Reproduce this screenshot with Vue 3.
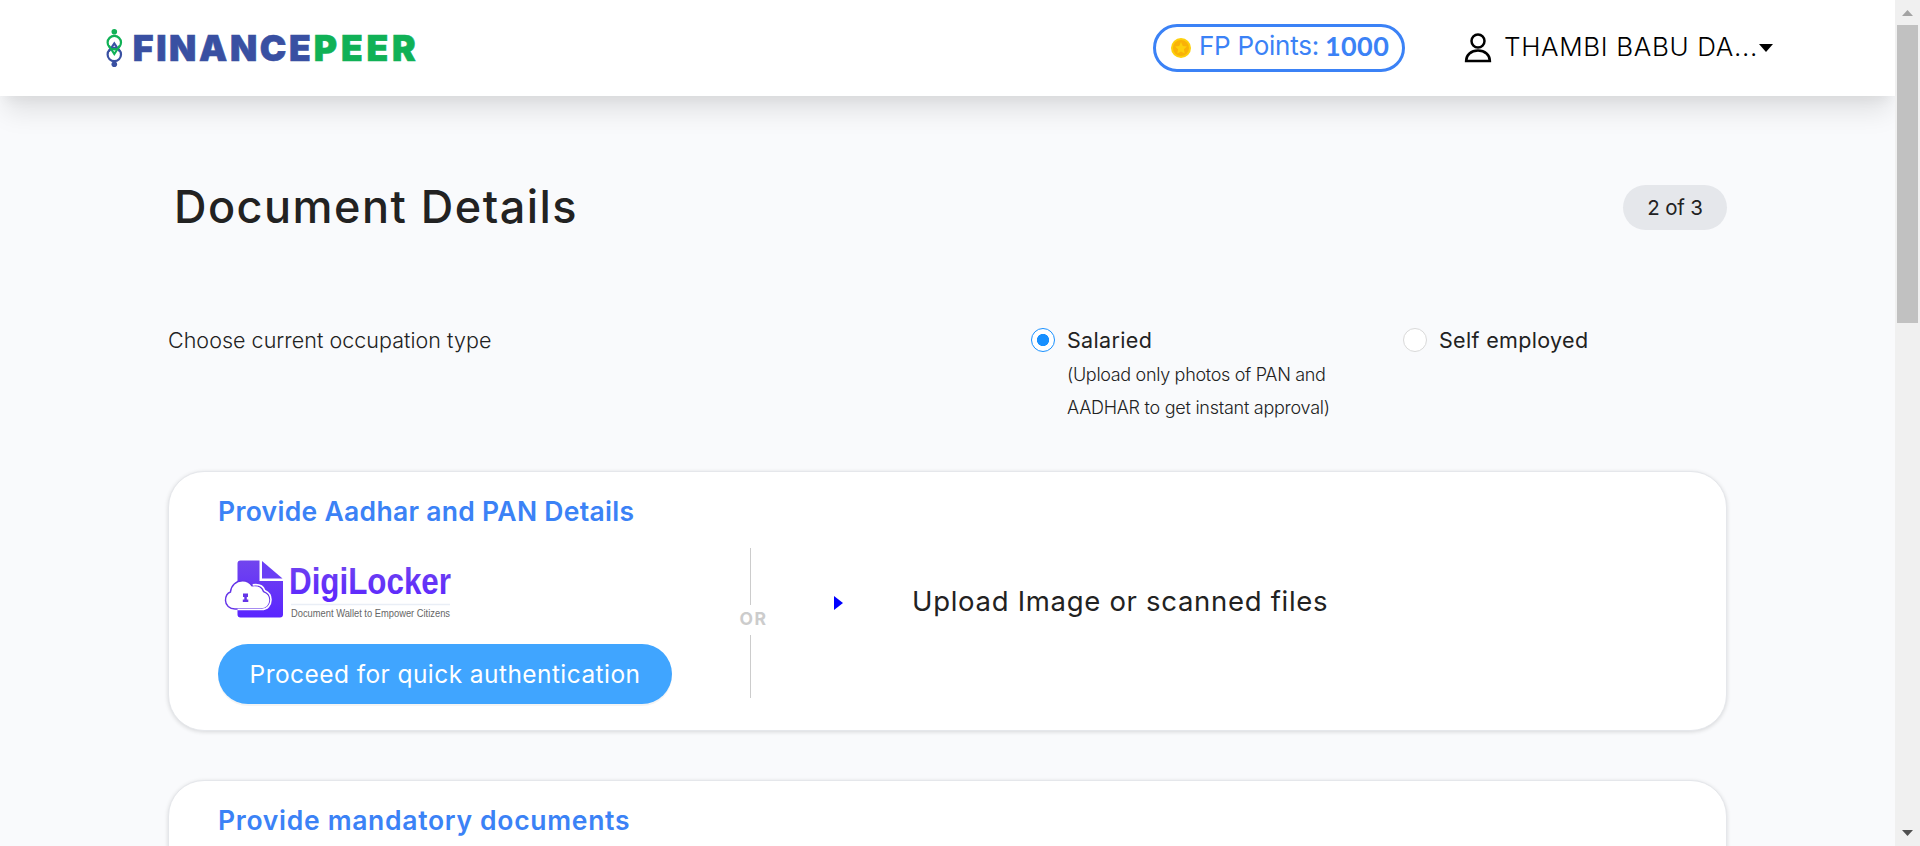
<script setup>
const occupations = [
  { label: 'Salaried', cls: 'salaried', checked: true, notes: ['(Upload only photos of PAN and', 'AADHAR to get instant approval)'] },
  { label: 'Self employed', cls: 'self', checked: false, notes: [] },
]
</script>

<template>
  <div class="screen">
    <div class="page">
      <header class="header">
        <svg class="brand" width="316" height="48" viewBox="0 0 316 48">
          <g fill="none" stroke-width="2.2">
            <circle cx="10.3" cy="30.5" r="6.7" stroke="#3950a2" />
            <circle cx="10.3" cy="18.6" r="6.7" stroke="#10b156" />
            <path d="M4.800 27.500 10.300 19.500l5.500 8" stroke="#3950a2" />
            <path d="M4.800 21.500l5.500 8.500 5.500-8.500" stroke="#10b156" />
          </g>
          <circle cx="10.3" cy="7.8" r="2.800" fill="#10b156" />
          <circle cx="10.3" cy="40.200" r="2.800" fill="#3950a2" />
          <text class="word" x="28.800" y="37" fill="#3950a2" stroke="#3950a2" textLength="178" lengthAdjust="spacing">FINANCE</text>
          <text class="word" x="209.800" y="37" fill="#10b156" stroke="#10b156" textLength="102" lengthAdjust="spacing">PEER</text>
        </svg>
        <div class="points">
          <svg class="coin" width="22" height="22" viewBox="0 0 22 22">
            <circle cx="11" cy="11" r="10" fill="#fdd00c" />
            <circle cx="11" cy="11" r="8" fill="#f9b208" />
            <path d="M11 5l1.8 3.9 4.2.5-3.1 2.9.8 4.2L11 14.400l-3.700 2.100.8-4.200L5 9.400l4.200-.5z" fill="#fdd00c" />
          </svg>
          <span class="points-label">FP Points:</span>
          <b>1000</b>
        </div>
        <div class="user">
          <svg width="28" height="30" viewBox="0 0 28 30" fill="none" stroke="#000" stroke-width="2.500">
            <circle cx="14" cy="8" r="6.500" />
            <path d="M2.100 27.900c0-6 5-10.400 11.900-10.400s11.900 4.400 11.900 10.400z" />
          </svg>
          <span>THAMBI BABU DA...</span>
          <i class="caret"></i>
        </div>
      </header>

      <main>
        <div class="title-row">
          <h1>Document Details</h1>
          <span class="step">2 of 3</span>
        </div>

        <div class="occupation">
          <div class="question">Choose current occupation type</div>
          <div v-for="o in occupations" :key="o.label" class="option" :class="o.cls">
            <span class="radio" :class="{ checked: o.checked }"></span>
            <div>
              <div class="option-label">{{ o.label }}</div>
              <div v-for="(n, i) in o.notes" :key="n" class="note" :class="'note' + i">{{ n }}</div>
            </div>
          </div>
        </div>

        <section class="card first">
          <h2>Provide Aadhar and PAN Details</h2>
          <div class="methods">
            <div class="locker">
              <svg class="digi" width="300" height="64" viewBox="0 0 300 64">
                <defs>
                  <linearGradient id="violet" x1="0" y1="0" x2="0" y2="1">
                    <stop offset="0" stop-color="#7145ee" />
                    <stop offset="1" stop-color="#5a25ff" />
                  </linearGradient>
                </defs>
                <g transform="translate(2.500 0)">
                  <path d="M20 3.500h19V24h23.500v33.500q0 3-3 3H20q-3 0-3-3v-51q0-3 3-3z" fill="url(#violet)" />
                  <path d="M41.500 4V21.500h20.500z" fill="#6a3ff5" />
                  <path d="M14.500 52C9 52 5 48 5 43.500c0-4.500 2-7.500 5-8.500.5-6.500 5.500-11.200 12-11.200 4.500 0 7.500 1.800 9.500 5 6.500-1 10.200 2 11.500 5.700 4 1.300 6.500 4.600 6.500 8.500 0 5-3.500 9-9 9z" fill="#fff" stroke="#6434e8" stroke-width="1.400" />
                  <path d="M17 52.500h24c6 0 9.500-4.500 9.500-9.700 0-4-2-7.500-6.300-9.300-1.400-4-5.500-6.600-12-5.600" fill="none" stroke="#fff" stroke-width="1.600" />
                  <path d="M22.500 36.500h5v3.500h-1.200v2.500h1.500v2.500h-5.500v-2.500h1.500V40h-1.300z" fill="#6434e8" />
                </g>
                <path d="M73 47.500h159" stroke="#e9eef6" stroke-width="1.500" />
                <text class="digi-name" x="71" y="37" fill="url(#violet)" textLength="162" lengthAdjust="spacingAndGlyphs">DigiLocker</text>
                <text class="digi-tag" x="73" y="60" textLength="159" lengthAdjust="spacingAndGlyphs">Document Wallet to Empower Citizens</text>
              </svg>
              <button>Proceed for quick authentication</button>
            </div>
            <div class="divider">
              <i class="line top"></i>
              <span>OR</span>
              <i class="line bottom"></i>
            </div>
            <div class="upload">
              <i class="arrow"></i>
              <span>Upload Image or scanned files</span>
            </div>
          </div>
        </section>

        <section class="card second">
          <h2>Provide mandatory documents</h2>
        </section>
      </main>
    </div>

    <div class="scrollbar">
      <svg width="25" height="25" viewBox="0 0 25 25"><path d="M7 16l5.500-6 5.500 6z" fill="#a3a3a3" /></svg>
      <div class="thumb"></div>
      <svg class="down" width="25" height="25" viewBox="0 0 25 25"><path d="M7 9h11l-5.500 6z" fill="#505050" /></svg>
    </div>
  </div>
</template>

<style>
body { margin: 0; overflow: hidden; }
</style>

<style scoped>
* { box-sizing: border-box; }
.screen { display: flex; height: 846px; overflow: hidden; font-family: Inter, "Liberation Sans", sans-serif; color: #222; }
.page { width: 1895px; height: 846px; overflow: hidden; background: #f9fafc; }
.header { position: relative; display: flex; align-items: center; height: 96px; padding-left: 104px; background: #fff; box-shadow: 0 20px 25px -5px rgba(0, 0, 0, .1), 0 10px 10px -5px rgba(0, 0, 0, .04); }
.word { font-weight: 900; font-size: 35.500px; stroke-width: .6px; }
.points { display: flex; align-items: center; width: 252px; height: 48px; margin-left: 733px; padding-left: 14px; border: 3px solid #3b82f6; border-radius: 24px; color: #3b82f6; font: 400 27px/40px Lato, sans-serif; letter-spacing: .4px; white-space: nowrap; }
.points .points-label { width: 120px; margin: -4px 6px 0 7px; font: 400 26px/40px Inter, sans-serif; letter-spacing: -.25px; }
.points b { margin-top: -5px; }
.points .coin { flex: none; }
.user { display: flex; align-items: center; margin-left: 59px; color: #000; font: 300 26px/40px Inter, sans-serif; letter-spacing: .65px; white-space: nowrap; }
.user span { width: 254px; margin: -3px 0 0 12px; }
.caret { border: 7px solid transparent; border-top: 8px solid #000; border-bottom: 0; margin-left: 1px; }
main { width: 1559px; margin: 89px 0 0 168px; }
.title-row { display: flex; align-items: center; justify-content: space-between; height: 45px; }
h1 { margin: -3px 0 0 6px; font-size: 45px; line-height: 45px; font-weight: 500; letter-spacing: 1.480px; }
.step { width: 104px; height: 45px; border-radius: 22.500px; background: #e5e7eb; text-align: center; font-size: 20.500px; line-height: 46px; font-weight: 400; letter-spacing: -.2px; }
.occupation { display: flex; height: 99px; margin-top: 94px; line-height: 33px; white-space: nowrap; }
.question { flex: none; width: 863px; font-size: 21.500px; font-weight: 280; letter-spacing: .03px; }
.option { display: flex; flex: none; font-size: 21.500px; width: 372px; }
.self { width: 200px; }
.radio { flex: none; width: 24px; height: 24px; margin: 4px 12px 0 0; border: 1px solid #d9d9d9; border-radius: 50%; background: #fff; }
.radio.checked { border-color: #1890ff; background: radial-gradient(circle, #1890ff 5.700px, #fff 6.500px); }
.option-label { height: 33px; letter-spacing: .33px; font-weight: 380; }
.note { height: 33px; font-size: 18px; font-weight: 360; line-height: 36px; letter-spacing: -.32px; }
.note1 { letter-spacing: -.26px; }
.card { width: 1559px; border: 1px solid #e5e7eb; border-radius: 36px; background: #fff; box-shadow: 0 1px 4px rgba(0, 0, 0, .14); padding-left: 49px; }
.first { height: 260px; margin-top: 48px; }
.second { height: 300px; margin-top: 49px; }
h2 { margin: 20px 0 0; color: #3b82f6; font-size: 26.500px; line-height: 38px; font-weight: 600; letter-spacing: .3px; }
.second h2 { letter-spacing: .7px; }
.methods { display: flex; height: 176px; }
.locker { width: 454px; padding-top: 27px; }
.digi { display: block; }
.digi-name { font: 700 36px "Liberation Sans", sans-serif; }
.digi-tag { font: 400 11px "Liberation Sans", sans-serif; fill: #666; }
button { display: block; width: 454px; height: 60px; margin: 23px 0 0; padding: 0; border: 0; border-radius: 30px; background: #40a5ff; color: #fff; box-shadow: 0 2px 0 rgba(0, 0, 0, .045); font: 400 24.500px/60px Inter, sans-serif; letter-spacing: .430px; }
.divider { width: 54px; margin-left: 54px; padding-top: 18px; color: #ccc; text-align: center; }
.line { display: block; width: 1px; margin-left: 24px; background: #ccc; }
.top { height: 57px; }
.bottom { height: 63px; }
.divider span { display: block; height: 30px; padding-left: 1px; font-size: 17.500px; font-weight: 700; line-height: 28px; letter-spacing: 1.600px; }
.upload { display: flex; height: 30px; margin: 56px 0 0 54px; align-items: center; }
.arrow { border: 7.500px solid transparent; border-left: 9px solid #00f; border-right: 0; margin-top: 4px; }
.upload span { margin-left: 69px; font-size: 27.500px; line-height: 30px; letter-spacing: .7px; white-space: nowrap; }
.scrollbar { display: flex; flex-direction: column; width: 25px; height: 846px; background: #f0f0f0; }
.scrollbar svg { flex: none; display: block; }
.thumb { width: 21px; height: 298px; margin-left: 2px; background: #c1c1c1; }
.down { margin-top: auto; }
</style>
